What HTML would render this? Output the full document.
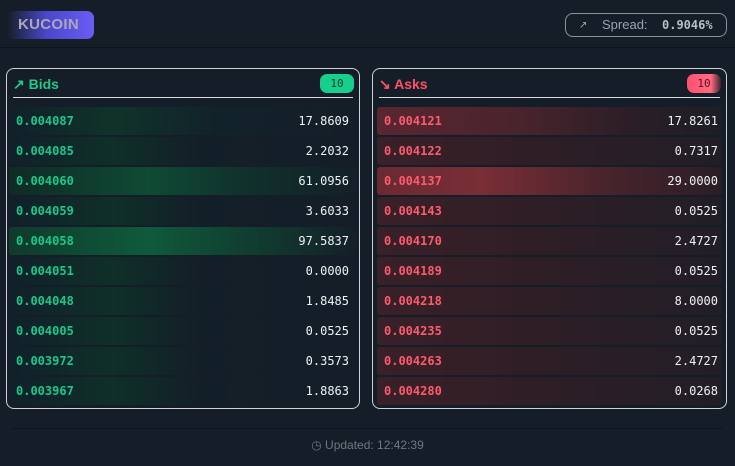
<!DOCTYPE html>
<html><head><style>
*{margin:0;padding:0;box-sizing:border-box}
body{width:735px;height:466px;background:#151e28;font-family:"Liberation Sans",sans-serif;position:relative;overflow:hidden}
.logo{position:absolute;left:7px;top:11px;width:87px;height:28px;border-radius:7px;background:linear-gradient(90deg,#151e28 0%,#4a47c8 45%,#6a5cf6 100%);color:#a9a9b9;font-weight:bold;font-size:15px;line-height:28px;padding-left:11px;letter-spacing:0.3px}
.spread{position:absolute;left:565px;top:13px;width:162px;height:24px;border:1px solid #8b929a;border-radius:8px;color:#9aa3ad;font-size:13px;line-height:22px}
.spread .ic{position:absolute;left:13px;top:1px;font-size:10px;color:#aaa}
.spread .t{position:absolute;left:36px}
.spread .v{position:absolute;left:96px;font-family:"DejaVu Sans Mono",monospace;font-size:12px;font-weight:bold;color:#b7bec6}
.hr{position:absolute;left:0;right:0;top:47px;height:1px;background:#0d141b}
.panel{position:absolute;top:68px;height:341px;border:1px solid #cdd2d6;border-radius:8px}
.bids{left:6px;width:354px}
.asks{left:372px;width:355px}
.head{position:absolute;left:6px;right:6px;top:0;height:29px;border-bottom:1px solid #d8dcdf;font-weight:bold;font-size:14px;line-height:30px}
.bids .head{color:#1fc98a}
.asks .head{color:#ff5068}
.badge{position:absolute;right:-1px;top:5px;width:34px;height:19px;border-radius:7px;font-family:"DejaVu Sans Mono",monospace;font-size:11px;line-height:19px;text-align:center;font-weight:normal}
.bids .badge{background:#16cf8d;color:#0d3b2a}
.asks .badge{background:linear-gradient(90deg,#ff5070,#ff6b80 70%,#3a2530);color:#5a1020}
.row{position:absolute;height:28px;border-radius:3px;font-family:"DejaVu Sans Mono",monospace;font-size:12px;line-height:28px}
.bids .row{left:2px;width:346px}
.asks .row{left:4px;width:345px}
.p{position:absolute;left:7px;font-weight:bold}
.bids .p{color:#19c989}
.asks .p{color:#ff5a6e}
.q{position:absolute;right:6px;color:#eef2f5}
.asks .q{right:4px}
.foot{position:absolute;left:12px;right:12px;top:428px;height:1px;background:#0d141b}
.upd{position:absolute;top:438px;left:0;right:0;text-align:center;color:#6f7780;font-size:12px}
</style></head><body>
<div class="logo">KUCOIN</div>
<div class="spread"><span class="ic">↗</span><span class="t">Spread:</span><span class="v">0.9046%</span></div>
<div class="hr"></div>

<div class="panel bids">
<div class="head">↗ Bids<span class="badge">10</span></div>
<div class="row" style="top:38px;background:linear-gradient(90deg,#11202a,#0f3329 30%,#12222a 60%,#141e28)"><span class="p">0.004087</span><span class="q">17.8609</span></div>
<div class="row" style="top:68px;background:linear-gradient(90deg,#11202a,#0f2f28 30%,#131f28 55%,#151e28)"><span class="p">0.004085</span><span class="q">2.2032</span></div>
<div class="row" style="top:98px;background:linear-gradient(90deg,#0f2a26,#0f4a34 40%,#10302c 70%,#141f28)"><span class="p">0.004060</span><span class="q">61.0956</span></div>
<div class="row" style="top:128px;background:linear-gradient(90deg,#11202a,#0f2f28 30%,#131f28 55%,#151e28)"><span class="p">0.004059</span><span class="q">3.6033</span></div>
<div class="row" style="top:158px;background:linear-gradient(90deg,#0f3a2c,#0f5a3c 40%,#11382e 75%,#141f28)"><span class="p">0.004058</span><span class="q">97.5837</span></div>
<div class="row" style="top:188px;background:linear-gradient(90deg,#11202a,#0f2f28 30%,#131f28 55%,#151e28)"><span class="p">0.004051</span><span class="q">0.0000</span></div>
<div class="row" style="top:218px;background:linear-gradient(90deg,#11202a,#0f2f28 30%,#131f28 55%,#151e28)"><span class="p">0.004048</span><span class="q">1.8485</span></div>
<div class="row" style="top:248px;background:linear-gradient(90deg,#11202a,#0f2f28 30%,#131f28 55%,#151e28)"><span class="p">0.004005</span><span class="q">0.0525</span></div>
<div class="row" style="top:278px;background:linear-gradient(90deg,#11202a,#0f2f28 30%,#131f28 55%,#151e28)"><span class="p">0.003972</span><span class="q">0.3573</span></div>
<div class="row" style="top:308px;background:linear-gradient(90deg,#11202a,#0f2f28 30%,#131f28 55%,#151e28)"><span class="p">0.003967</span><span class="q">1.8863</span></div>
</div>

<div class="panel asks">
<div class="head">↘ Asks<span class="badge">10</span></div>
<div class="row" style="top:38px;background:linear-gradient(90deg,#5a2630,#4a242c 40%,#2a1e26 75%,#1e1e26)"><span class="p">0.004121</span><span class="q">17.8261</span></div>
<div class="row" style="top:68px;background:linear-gradient(90deg,#3a2028,#2e1e26 50%,#221e26)"><span class="p">0.004122</span><span class="q">0.7317</span></div>
<div class="row" style="top:98px;background:linear-gradient(90deg,#6a2a32,#7a2e36 30%,#4a242c 65%,#2a1e26)"><span class="p">0.004137</span><span class="q">29.0000</span></div>
<div class="row" style="top:128px;background:linear-gradient(90deg,#3a2028,#2e1e26 50%,#221e26)"><span class="p">0.004143</span><span class="q">0.0525</span></div>
<div class="row" style="top:158px;background:linear-gradient(90deg,#3a2028,#2e1e26 50%,#221e26)"><span class="p">0.004170</span><span class="q">2.4727</span></div>
<div class="row" style="top:188px;background:linear-gradient(90deg,#3a2028,#2e1e26 50%,#221e26)"><span class="p">0.004189</span><span class="q">0.0525</span></div>
<div class="row" style="top:218px;background:linear-gradient(90deg,#3a2028,#2e1e26 50%,#221e26)"><span class="p">0.004218</span><span class="q">8.0000</span></div>
<div class="row" style="top:248px;background:linear-gradient(90deg,#3a2028,#2e1e26 50%,#221e26)"><span class="p">0.004235</span><span class="q">0.0525</span></div>
<div class="row" style="top:278px;background:linear-gradient(90deg,#3a2028,#2e1e26 50%,#221e26)"><span class="p">0.004263</span><span class="q">2.4727</span></div>
<div class="row" style="top:308px;background:linear-gradient(90deg,#3a2028,#2e1e26 50%,#221e26)"><span class="p">0.004280</span><span class="q">0.0268</span></div>
</div>

<div class="foot"></div>
<div class="upd">◷ Updated: 12:42:39</div>
</body></html>
